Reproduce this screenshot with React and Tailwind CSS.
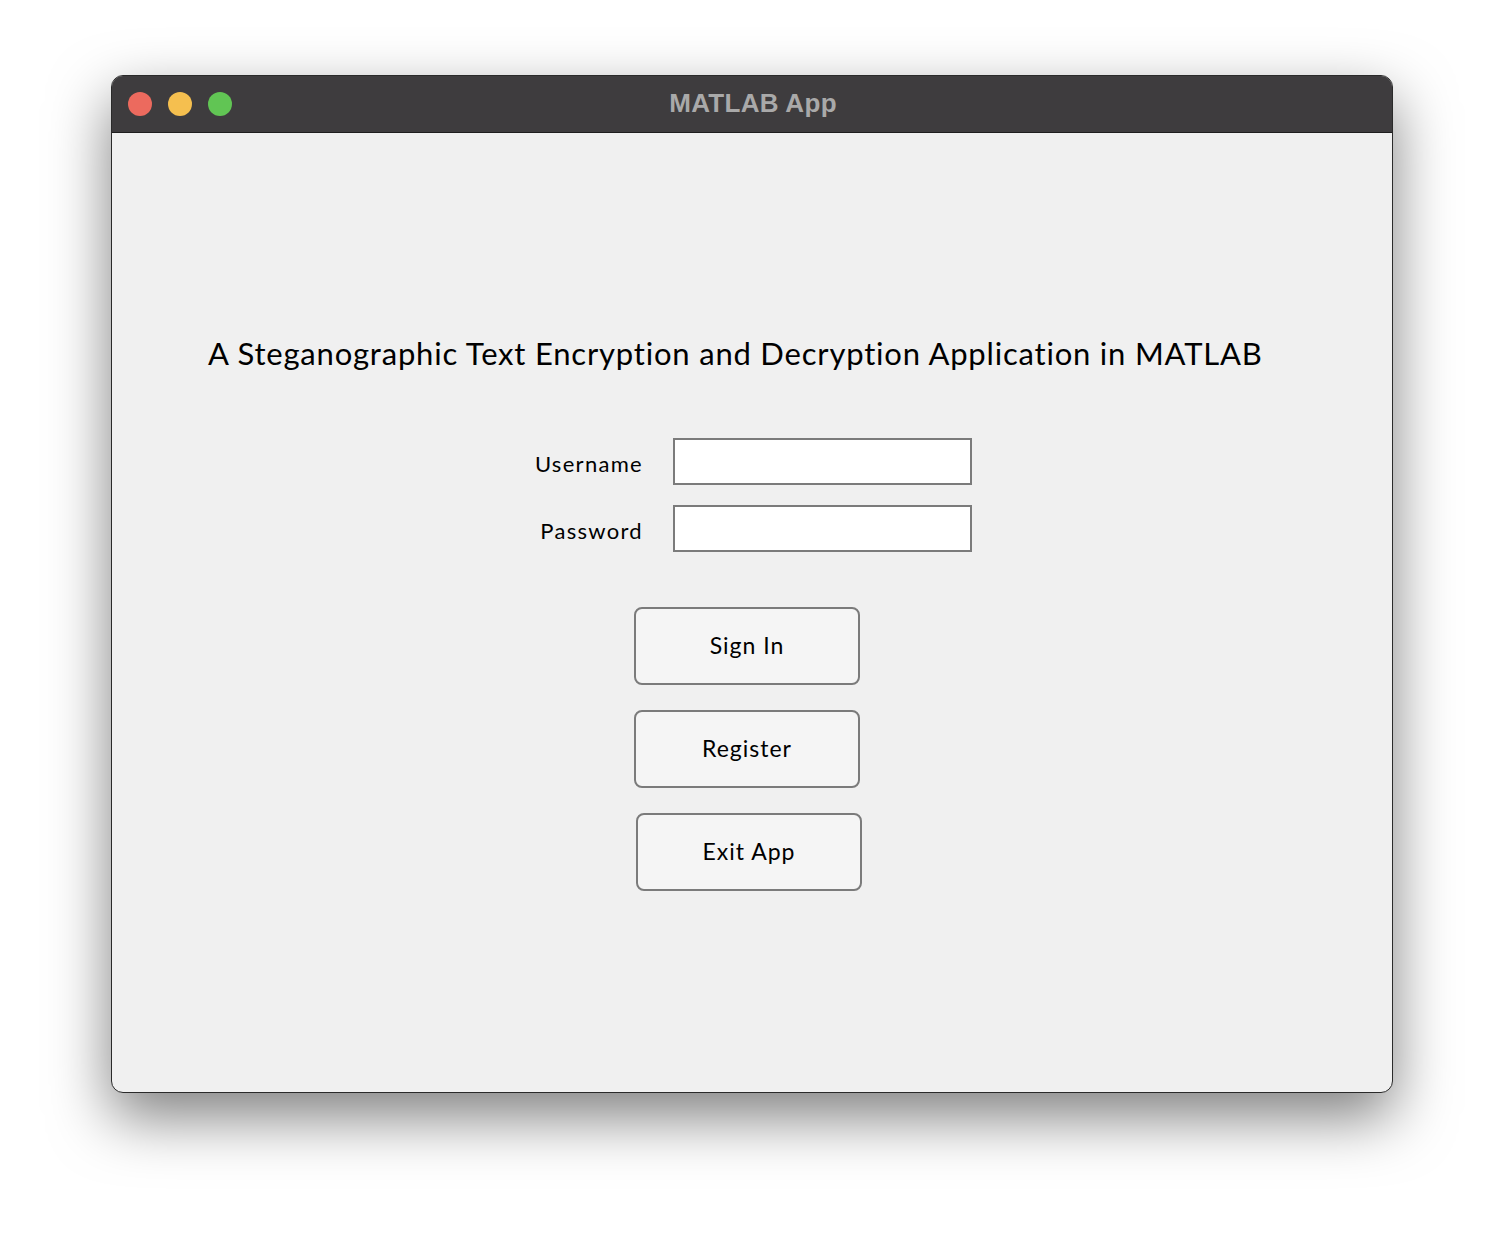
export default function App() {
  const body = { fontFamily: 'Lato, "Noto Sans", sans-serif', fontVariantLigatures: 'none' };
  return (
    <div className="w-[1504px] h-[1240px] bg-white pt-[75px] pl-[111px]">
      <div className="w-[1282px] h-[1018px] rounded-[12px] border border-[#2a2a2a] overflow-hidden bg-[#f0f0f0] shadow-[0_24px_60px_rgba(0,0,0,0.5)] flex flex-col">
        <div className="h-[57px] bg-[#3e3c3e] border-b border-[#1e1e1e] flex items-center relative shrink-0">
          <div className="flex gap-[16px] pl-[16px]">
            <div className="w-[24px] h-[24px] rounded-full bg-[#ec6a5e]" />
            <div className="w-[24px] h-[24px] rounded-full bg-[#f5bf4f]" />
            <div className="w-[24px] h-[24px] rounded-full bg-[#61c554]" />
          </div>
          <div className="absolute inset-0 flex items-center justify-center pl-[2px] pb-[1px] text-[#a9a9a9] text-[26px] font-bold tracking-[0.3px]" style={{ fontFamily: '"Liberation Sans", Arial, sans-serif' }}>
            MATLAB App
          </div>
        </div>
        <div className="flex-1 flex flex-col text-black" style={body}>
          <div className="mt-[200px] pl-[96px] text-[31px] leading-[40px] tracking-[0.8px] whitespace-nowrap">
            A Steganographic Text Encryption and Decryption Application in MATLAB
          </div>
          <div className="mt-[65px] flex flex-col gap-[20px]">
            <div className="flex items-center">
              <div className="w-[531px] text-right text-[22px] tracking-[1.3px] -mr-[1px] pt-[3px]">Username</div>
              <div className="ml-[31px] w-[299px] h-[47px] bg-white border-2 border-[#7b7b7b]" />
            </div>
            <div className="flex items-center">
              <div className="w-[531px] text-right text-[22px] tracking-[1.3px] -mr-[1px] pt-[3px]">Password</div>
              <div className="ml-[31px] w-[299px] h-[47px] bg-white border-2 border-[#7b7b7b]" />
            </div>
          </div>
          <div className="mt-[55px] flex flex-col gap-[25px]">
            <button className="ml-[522px] w-[226px] h-[78px] rounded-[8px] border-2 border-[#7b7b7b] bg-[#f5f5f5] text-[23px] tracking-[1px] pb-[2px]">Sign In</button>
            <button className="ml-[522px] w-[226px] h-[78px] rounded-[8px] border-2 border-[#7b7b7b] bg-[#f5f5f5] text-[23px] tracking-[1px] pb-[2px]">Register</button>
            <button className="ml-[524px] w-[226px] h-[78px] rounded-[8px] border-2 border-[#7b7b7b] bg-[#f5f5f5] text-[23px] tracking-[1px] pb-[2px]">Exit App</button>
          </div>
        </div>
      </div>
    </div>
  );
}
